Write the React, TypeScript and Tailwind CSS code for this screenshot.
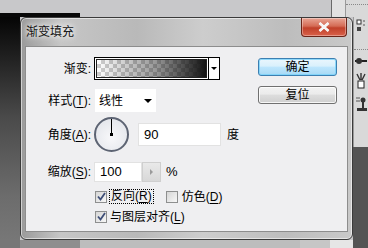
import React from 'react';

const uiFont = "font-['Liberation_Sans','Noto_Sans_CJK_SC',sans-serif]";

function Hotkey({ k }: { k: string }) {
  return (
    <>
      (<span className="underline underline-offset-2">{k}</span>)
    </>
  );
}

function Checkbox({ checked }: { checked: boolean }) {
  return (
    <span className="flex h-[12px] w-[12px] shrink-0 items-center justify-center border border-[#8e8f8f] bg-[linear-gradient(135deg,#d6d6d6,#f7f7f7)]">
      {checked ? (
        <svg width="9" height="9" viewBox="0 0 9 9">
          <path d="M1 4.5 L3.5 7.5 L8 1" fill="none" stroke="#3f4f78" strokeWidth="1.8" />
        </svg>
      ) : null}
    </span>
  );
}

function AngleDial() {
  return (
    <div className="relative h-[35px] w-[35px] shrink-0 rounded-full border-2 border-[#5d6473] bg-[radial-gradient(circle_at_50%_60%,#f8f8fa,#dfe2e8)]">
      <div className="absolute left-[15px] top-0 h-[15px] w-px bg-black" />
      <div className="absolute left-[14px] top-[14px] h-[3px] w-[3px] bg-black" />
    </div>
  );
}

function FormRow({ label, className, children }: { label: React.ReactNode; className: string; children: React.ReactNode }) {
  return (
    <div className={`flex items-center ${className}`}>
      <div className="w-[65px] shrink-0 text-right leading-[14px]">{label}</div>
      <div className="ml-[3px] flex items-center">{children}</div>
    </div>
  );
}

function SidePanel() {
  return (
    <div className="flex h-[223px] w-[15px] flex-col">
      <div className="flex h-[130px] flex-col items-center gap-[6px] border-l border-[#9a9a9a] bg-[#d9d9d9] pt-[2px]">
        <svg width="10" height="14" viewBox="0 0 10 14">
          <rect x="1" y="1" width="4" height="4" fill="#fff" stroke="#333" />
          <rect x="1" y="8" width="4" height="4" fill="#444" />
          <path d="M7 2 L9 2 M7 6 L9 6" stroke="#555" />
        </svg>
        <div className="mt-[10px] w-full border-t border-dotted border-[#888]" />
        <svg width="12" height="10" viewBox="0 0 12 10">
          <path d="M0 5 L12 5" stroke="#222" strokeWidth="2" />
          <circle cx="4" cy="5" r="3" fill="#333" />
        </svg>
        <svg width="12" height="18" viewBox="0 0 12 18">
          <path d="M2 2 L5 8 M10 2 L7 8 M6 1 L6 8" stroke="#333" strokeWidth="1.4" />
          <rect x="3" y="9" width="6" height="7" fill="#fff" stroke="#222" />
        </svg>
        <svg width="12" height="16" viewBox="0 0 12 16">
          <path d="M1 2 L5 2 M1 5 L5 5" stroke="#555" />
          <circle cx="8" cy="4" r="2.5" fill="#333" />
          <rect x="7" y="6" width="2" height="6" fill="#333" />
          <rect x="2" y="12" width="10" height="3" fill="#333" />
        </svg>
      </div>
      <div className="flex-1 bg-[#545454]" />
    </div>
  );
}

export default function App() {
  return (
    <div className={`flex h-[248px] w-[368px] flex-col overflow-hidden bg-[#c7c7c9] text-[12px] text-black ${uiFont}`}>
      {/* desktop strip above the dialog */}
      <div className="flex h-[17px] shrink-0">
        <div className="flex w-[80px] flex-col">
          <div className="h-[13px] bg-[#c8c8ca]" />
          <div className="flex-1 bg-[#080808]" />
        </div>
        <div className="w-[251px] bg-[#c8c8ca]" />
        <div className="w-[14px] border-l border-[#6a6a6a] bg-[#e2e2e2]" />
        <div className="flex-1 border-l border-[#9a9a9a] bg-[#d9d9d9] pt-[4px]">
          <div className="border-t border-dotted border-[#888]" />
        </div>
      </div>

      <div className="flex h-[223px] shrink-0">
        <div className="w-[20px] bg-[linear-gradient(to_bottom,#050505,#4a4a4a_45%,#6c6c6c_80%,#777)]" />

        {/* dialog window */}
        <div className="flex h-[223px] w-[333px] flex-col rounded-[6px] border border-[#3b3b3b] bg-[linear-gradient(to_right,#9a9a9a,#c6c6c6_12%,#b9b9b9_35%,#cdcdcd_55%,#bdbdbd_80%,#c9c9c9)] shadow-[inset_0_0_0_1px_rgba(255,255,255,0.55)]">
          <div className="flex h-[28px] shrink-0 items-start">
            <span className="ml-[5px] mt-[7px] leading-[14px] text-[#111] [text-shadow:0_0_5px_#fff,0_0_8px_#fff]">
              渐变填充
            </span>
            <div className="ml-auto mr-[5px] flex h-[19px] w-[46px] items-center justify-center rounded-b-[4px] border border-t-0 border-[#6b2418] bg-[linear-gradient(to_bottom,#e9a595,#d46b55_45%,#c0402a_55%,#d9614a)] shadow-[inset_0_0_0_1px_rgba(255,255,255,0.35)]">
              <svg width="12" height="10" viewBox="0 0 12 10">
                <path d="M1.5 1 L10.5 9 M10.5 1 L1.5 9" stroke="#fff" strokeWidth="2.6" />
                <path d="M1.5 1 L10.5 9 M10.5 1 L1.5 9" stroke="#f4f4f4" strokeWidth="1.6" />
              </svg>
            </div>
          </div>

          <div className="mx-[4px] flex h-[186px] border border-[#8d8d8d] bg-[#efeff1]">
            <div className="flex flex-1 flex-col">
              <FormRow label="渐变:" className="mt-[10px] h-[23px]">
                <div className="flex h-[23px] w-[126px] border border-black bg-white">
                  <div className="m-px flex-1 border border-[#222] bg-[conic-gradient(#cfcfcf_25%,#fff_0_50%,#cfcfcf_0_75%,#fff_0)] bg-[length:8px_8px]">
                    <div className="h-full w-full bg-[linear-gradient(to_right,rgba(20,20,20,0),rgba(20,20,20,0.45)_55%,#141414)]" />
                  </div>
                  <div className="flex w-[11px] items-center justify-center border-l border-black">
                    <div className="h-0 w-0 border-x-[3px] border-t-[3px] border-x-transparent border-t-black" />
                  </div>
                </div>
              </FormRow>

              <FormRow
                label={
                  <>
                    样式<Hotkey k="T" />:
                  </>
                }
                className="mt-[9px] h-[23px]"
              >
                <div className="ml-px flex h-[23px] w-[61px] items-center bg-white pl-[4px] pr-[4px]">
                  <span className="leading-[14px]">线性</span>
                  <div className="ml-auto h-0 w-0 border-x-[4px] border-t-[4px] border-x-transparent border-t-black" />
                </div>
              </FormRow>

              <FormRow
                label={
                  <>
                    角度<Hotkey k="A" />:
                  </>
                }
                className="mt-[5px] h-[35px]"
              >
                <AngleDial />
                <div className="ml-[9px] flex h-[23px] w-[83px] items-center border border-[#e2e2e2] bg-white pl-[5px] text-[13px]">
                  90
                </div>
                <span className="ml-[6px]">度</span>
              </FormRow>

              <FormRow
                label={
                  <>
                    缩放<Hotkey k="S" />:
                  </>
                }
                className="mt-[10px] h-[20px]"
              >
                <div className="flex h-[20px] w-[48px] items-center border border-[#e2e2e2] bg-white pl-[5px] text-[13px]">
                  100
                </div>
                <div className="flex h-[20px] w-[19px] items-center justify-center border border-[#cfcfcf] bg-[linear-gradient(to_bottom,#e9e9e9,#d8d8d8)]">
                  <div className="h-0 w-0 border-y-[3px] border-l-[3px] border-y-transparent border-l-[#9a9a9a]" />
                </div>
                <span className="ml-[5px] text-[13px]">%</span>
              </FormRow>

              <div className="ml-[69px] mt-[7px] flex h-[15px] items-center">
                <Checkbox checked />
                <span className="ml-[2px] border border-dotted border-black px-px leading-[13px]">
                  反向<Hotkey k="R" />
                </span>
                <span className="ml-[12px]">
                  <Checkbox checked={false} />
                </span>
                <span className="ml-[4px] leading-[14px]">
                  仿色<Hotkey k="D" />
                </span>
              </div>

              <div className="ml-[69px] mt-[5px] flex h-[15px] items-center">
                <Checkbox checked />
                <span className="ml-[3px] leading-[14px]">
                  与图层对齐<Hotkey k="L" />
                </span>
              </div>
            </div>

            <div className="mr-[10px] flex w-[79px] flex-col gap-[10px] pt-[11px]">
              <button
                type="button"
                className="h-[18px] rounded-[3px] border border-[#3c7fb1] bg-[linear-gradient(to_bottom,#eaf6fd,#d9f0fc_45%,#bee6fd_50%,#a7d9f5)] leading-[14px] shadow-[inset_0_0_0_1px_rgba(120,210,250,0.8)]"
              >
                确定
              </button>
              <button
                type="button"
                className="h-[18px] rounded-[3px] border border-[#707070] bg-[linear-gradient(to_bottom,#f2f2f2,#ebebeb_45%,#dddddd_50%,#cfcfcf)] leading-[14px] shadow-[inset_0_0_0_1px_rgba(255,255,255,0.8)]"
              >
                复位
              </button>
            </div>
          </div>
        </div>

        <SidePanel />
      </div>

      {/* desktop strip below the dialog */}
      <div className="flex flex-1">
        <div className="w-[20px] bg-[#777]" />
        <div className="w-[60px] bg-[#8e8e8e]" />
        <div className="w-[220px] bg-[#bdbdbd]" />
        <div className="w-[30px] bg-[#c6c6c6]" />
        <div className="w-[23px] bg-[#e6e6e6]" />
        <div className="flex-1 bg-[#545454]" />
      </div>
    </div>
  );
}
